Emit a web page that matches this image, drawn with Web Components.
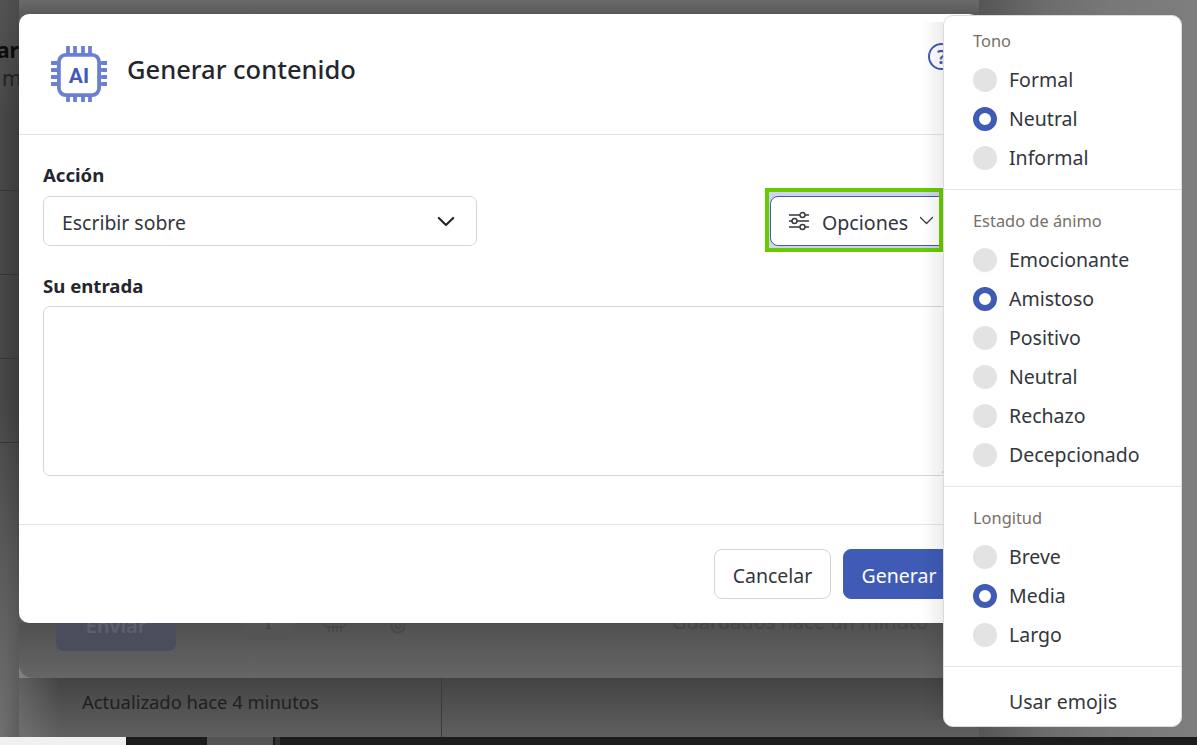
<!DOCTYPE html>
<html lang="es"><head><meta charset="utf-8"><title>Generar contenido</title>
<style>
html,body{margin:0;padding:0;background:#808080;overflow:hidden}
body{font-family:"Noto Sans","Open Sans",sans-serif;color:#33363d}
</style></head><body>
<app-stage>
  <back-panel slot="panel"></back-panel>
  <ai-dialog slot="dialog"></ai-dialog>
  <options-menu slot="menu"></options-menu>
</app-stage>
<script>
function def(name, html, setup){
  customElements.define(name, class extends HTMLElement{
    constructor(){super();this.attachShadow({mode:'open'}).innerHTML=html;}
    connectedCallback(){ if(setup) setup(this); }
  });
}
const chevron=(w,sw,c)=>`<svg width="${w}" height="${Math.round(w*.6)}" viewBox="0 0 20 12" fill="none" stroke="${c}" stroke-width="${sw}" stroke-linecap="round" stroke-linejoin="round" style="display:block"><path d="M2 2l8 8 8-8"/></svg>`;

def('app-stage',`<style>
:host{display:block;width:1197px;height:745px;position:relative;overflow:hidden;
background:
 radial-gradient(ellipse 60px 340px at 0 737px,rgba(128,128,128,.7),rgba(128,128,128,0)) 0 0/60px 737px no-repeat,
 linear-gradient(to bottom,rgba(128,128,128,.22),rgba(128,128,128,0)) 0 0/19px 120px no-repeat,
 linear-gradient(to right,#484848,#3c3c3c) 0 0/19px 737px no-repeat,
 linear-gradient(to right,#555 0,#6c6c6c 30%,#787878 60%,#7e7e7e 100%) 979px 0/218px 737px no-repeat,
 linear-gradient(to bottom,#434343,#606060) 19px 678px/960px 59px no-repeat,
 #808080}
.base{display:grid;grid-template-columns:442px 1fr;grid-template-rows:737px 8px;height:745px}
.side{border-right:1px solid #3a3a3a;display:flex;flex-direction:column;overflow:hidden;box-sizing:border-box}
.r1{height:191px;box-sizing:border-box;border-bottom:1px solid #333;padding-top:36px;white-space:nowrap}
.r1 b{display:block;font-size:21px;line-height:28px;margin-left:-3px;color:#0c0c0c;font-weight:700}
.r1 span{display:block;font-size:21px;line-height:28px;color:#222;margin-left:2px}
.r{height:84px;box-sizing:border-box;border-bottom:1px solid #333;flex:none}
.upd{margin-top:auto;height:59px;box-sizing:border-box;padding:10px 0 0 82px;font-size:18.4px;line-height:28px;color:#1f1f1f;white-space:nowrap}
.tb{grid-column:1/3;background:#1c1c1c;display:flex}
.tb i{display:block;height:8px}
.a{width:126px;background:#f0f0f0}.b{width:81px}.c{width:66px;background:#555}.d{width:5px;margin-left:2px;background:#333}
</style>
<div class="base">
  <div class="side"><div class="r1"><b>ar</b><span>m</span></div><div class="r"></div><div class="r"></div><div class="r"></div>
    <div class="upd">Actualizado hace 4 minutos</div></div>
  <div></div>
  <div class="tb"><i class="a"></i><i class="b"></i><i class="c"></i><i class="d"></i></div>
</div>
<slot name="panel"></slot><slot name="dialog"></slot><slot name="menu"></slot>`);

def('back-panel',`<style>
:host{display:flex;position:absolute;left:19px;top:0;width:960px;height:678px;box-sizing:border-box;border-radius:0 0 14px 14px;padding:0 51px 27px 37px;align-items:flex-end;
background:linear-gradient(to bottom,#6a6a6a,#5a5a5a) 0 0/100% 14px no-repeat,linear-gradient(to bottom,#505050,#666) 0 623px/100% 55px no-repeat,#5a5a5a}
.send{width:120px;height:50px;background:#4a4e5c;border-radius:8px;color:#5c5f6c;font-size:20px;line-height:50px;text-align:center;font-weight:600;flex:none}
.ic{width:47px;height:40px;margin:0 0 11px 69px;background:#545454;border-radius:8px;color:#454545;text-align:center;font-size:18px;line-height:44px;flex:none}
svg{flex:none}
.saved{margin-left:auto;margin-bottom:16px;font-size:20px;color:#454545;white-space:nowrap}
</style>
<div class="send">Enviar</div><div class="ic">I</div>
<svg style="margin:0 0 19px 30px" width="26" height="30" viewBox="0 0 26 30" fill="none" stroke="#484848" stroke-width="2"><rect x="2" y="0" width="22" height="25" rx="4"/><path d="M7 25v5M11 25v5M15 25v5M19 25v5"/></svg>
<svg style="margin:0 0 16px 42px" width="16" height="26" viewBox="0 0 16 26" fill="none" stroke="#484848" stroke-width="2"><path d="M1.5 4v13a6.5 6.5 0 0 0 13 0V4"/><path d="M5.5 6v11a2.5 2.5 0 0 0 5 0V6"/></svg>
<div class="saved">Guardados hace un minuto</div>`);

def('ai-icon',`<style>:host{display:block;width:56px;height:56px;flex:none}svg{display:block}
text{font-family:Roboto,"Liberation Sans",sans-serif;font-weight:700;font-size:21px;fill:#3f5bb5}</style>
<svg width="56" height="56" viewBox="0 0 56 56" fill="none">
<g stroke="#6b80d0" stroke-width="3.8">
<rect x="7.9" y="8.9" width="40.2" height="40.2" rx="7"/>
<path d="M17 1v6M24 1v6M32 1v6M39 1v6M17 51v5M24 51v5M32 51v5M39 51v5" stroke-linecap="round"/>
<path d="M1 17h5M1 24h5M1 31h5M1 38h5M51 17h5M51 24h5M51 31h5M51 38h5" stroke-linecap="round"/>
</g>
<text x="28" y="36.5" text-anchor="middle">AI</text></svg>`);

def('ui-btn',`<style>
:host{display:inline-flex;align-items:center;justify-content:center;height:50px;box-sizing:border-box;border-radius:8px;font-size:19.5px;border:1px solid #d3d6e0;background:#fff;color:#33363d;padding:2px 0 0;white-space:nowrap}
:host([primary]){background:#3f5bb5;border-color:#3f5bb5;color:#fff}
</style><slot></slot>`);

def('ai-dialog',`<style>
:host{display:block;position:absolute;left:19px;top:14px;width:960px;height:609px;background:#fff;border-radius:10px;font-family:"Noto Sans",sans-serif}
header{height:121px;box-sizing:border-box;border-bottom:1px solid #e3e4e8;padding:32px 24px 0 32px;display:flex;align-items:flex-start;gap:20px}
h1{margin:0;font-size:25.5px;line-height:46px;font-weight:500;color:#24262c}
.help{margin-left:auto;width:27px;height:27px;box-sizing:border-box;border:2px solid #3f5bb5;border-radius:50%;color:#3f5bb5;font-size:20px;font-weight:600;line-height:23px;text-align:center;margin-top:-3px}
main{padding:26px 24px 48px;height:389px;box-sizing:border-box}
label{display:block;font-size:18.6px;line-height:28px;font-weight:700;color:#24262c}
.row{display:flex;justify-content:space-between;margin-top:7px;margin-bottom:26px}
.sel{width:434px;height:50px;box-sizing:border-box;border:1px solid #d3d6e0;border-radius:7px;display:flex;align-items:center;justify-content:space-between;padding:0 21px 0 18px;font-size:19.4px;color:#33363d}
.sel span,.optb span{padding-top:2px}
.opt{position:relative;width:185px}
.ring{position:absolute;inset:-4px;background:#cfd5ee;border-radius:3px}
.optb{position:relative;width:185px;height:50px;box-sizing:border-box;border:1px solid #3f5bb5;border-radius:8px;background:#fff;display:flex;align-items:center;padding-left:17px;gap:12px;font-size:19.6px;color:#33363d}
.optb .chev{padding:0;margin-top:-2px;margin-left:-1px}
.hl{position:absolute;left:-5px;top:-8px;right:12px;bottom:-6px;border:4px solid #66cc00;pointer-events:none}
.ta{position:relative;margin-top:6px}
textarea{display:block;width:912px;height:170px;box-sizing:border-box;border:1px solid #d3d6e0;border-radius:7px;padding:0;background:#fff;outline:none;font:inherit;resize:none}
.grip{position:absolute;left:897px;top:164px;width:0;height:0;border:2px solid transparent;border-right:3px solid #555;pointer-events:none}
footer{border-top:1px solid #e3e4e8;display:flex;justify-content:flex-end;gap:12px;padding:24px 24px 0}
</style>
<header><ai-icon></ai-icon><h1>Generar contenido</h1><span class="help">?</span></header>
<main>
 <label>Acción</label>
 <div class="row">
  <div class="sel"><span>Escribir sobre</span>${chevron(18,2.4,'#24262c')}</div>
  <div class="opt"><div class="ring"></div><div class="optb">
    <svg width="22" height="20" viewBox="0 0 22 20" fill="none" stroke="#33363d" stroke-width="1.4"><path d="M1 4h11M17 4h4M1 10h3M9 10h12M1 16h11M17 16h4"/><circle cx="14.5" cy="4" r="2.5"/><circle cx="6.5" cy="10" r="2.5"/><circle cx="14.5" cy="16" r="2.5"/></svg>
    <span>Opciones</span><span class="chev">${chevron(15,1.6,'#33363d')}</span></div>
    <div class="hl"></div></div>
 </div>
 <label>Su entrada</label>
 <div class="ta"><textarea aria-label="Su entrada"></textarea><i class="grip"></i></div>
</main>
<footer><ui-btn style="width:117px">Cancelar</ui-btn><ui-btn primary style="width:112px">Generar</ui-btn></footer>`);

def('radio-item',`<style>
:host{display:flex;align-items:center;height:39px;gap:12px;font-size:19.5px;color:#33363d;white-space:nowrap}
i{display:block;width:24px;height:24px;border-radius:50%;background:#e3e3e3;box-sizing:border-box;flex:none}
:host([checked]) i{background:#fff;border:6px solid #3f5bb5}
.t{line-height:39px}
</style><i></i><span class="t"><slot></slot></span>`);

def('menu-group',`<style>
:host{display:block;padding:15px 0 12px 29px;border-bottom:1px solid #e6e6e6}
:host([first]){padding-top:9px}
.l{font-size:16.4px;line-height:32px;color:#766f66;height:35px}
</style><div class="l"></div><slot></slot>`, el=>{el.shadowRoot.querySelector('.l').textContent=el.getAttribute('label')});

def('options-menu',`<style>
:host{display:block;position:absolute;left:943px;top:15px;width:239px;height:712px;box-sizing:border-box;background:#fff;border:1px solid #dcdcdc;border-radius:10px;font-family:"Noto Sans",sans-serif}
:host::before{content:"";position:absolute;left:-22px;top:6px;bottom:6px;width:21px;background:linear-gradient(to right,rgba(0,0,0,0),rgba(0,0,0,.07));pointer-events:none}
.e{padding:15px 0 0 65px;font-size:19.5px;line-height:39px;color:#33363d}
</style>
<menu-group first label="Tono"><radio-item>Formal</radio-item><radio-item checked>Neutral</radio-item><radio-item>Informal</radio-item></menu-group>
<menu-group label="Estado de ánimo"><radio-item>Emocionante</radio-item><radio-item checked>Amistoso</radio-item><radio-item>Positivo</radio-item><radio-item>Neutral</radio-item><radio-item>Rechazo</radio-item><radio-item>Decepcionado</radio-item></menu-group>
<menu-group label="Longitud"><radio-item>Breve</radio-item><radio-item checked>Media</radio-item><radio-item>Largo</radio-item></menu-group>
<div class="e">Usar emojis</div>`);
</script>
</body></html>
